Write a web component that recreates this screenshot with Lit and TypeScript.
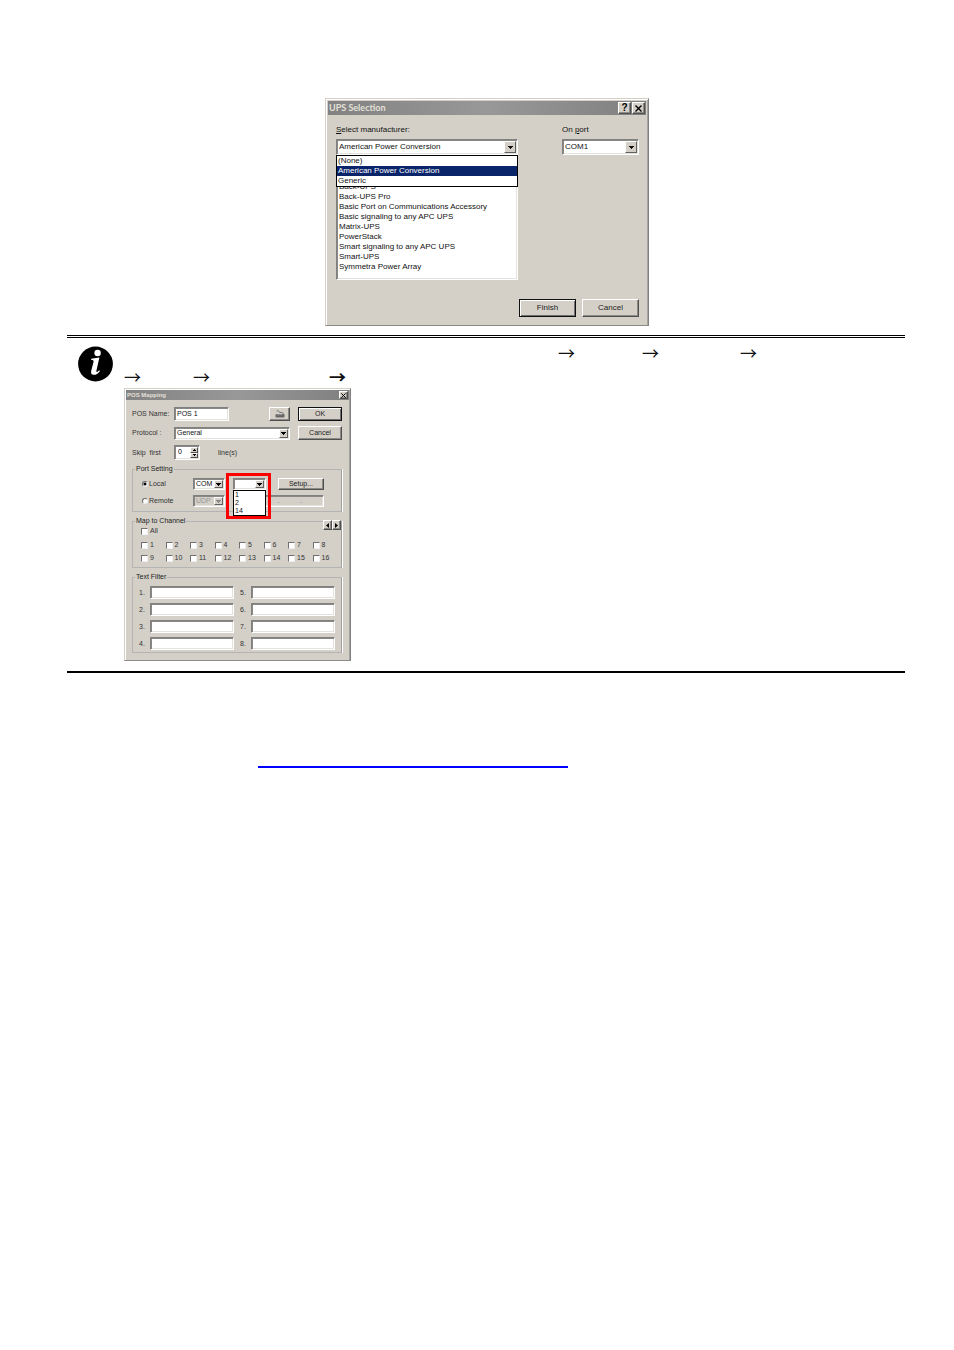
import { LitElement, html, css, svg } from "lit";
import { customElement } from "lit/decorators.js";

const controls = css`
  * { box-sizing: border-box; }
  .window {
    display: block;
    max-width: 100%;
    background: #d4d0c8;
    border: 1px solid;
    border-color: #d4d0c8 #808080 #8c8a86 #d4d0c8;
    box-shadow: inset 1px 1px #fff, inset -1px 0 #a6a4a0;
  }
  .bar {
    display: flex;
    align-items: center;
    background: linear-gradient(90deg, #828282, #989898 50%, #808080);
    color: #e4e0d8;
    font-weight: 700;
  }
  .bar h2 { flex: 1; margin: 0; font-size: inherit; }
  button {
    display: inline-flex;
    align-items: center;
    justify-content: center;
    margin: 0;
    padding: 0;
    font: inherit;
    color: #222;
    background: #d4d0c8;
    border: 1px solid;
    border-color: #fff #505050 #505050 #fff;
    border-radius: 0;
    box-shadow: inset -1px -1px #8c8a86;
  }
  button.default {
    border-color: #111;
    box-shadow: inset 1px 1px #fff, inset -1px -1px #707070;
  }
  input.text, select, .spin, .ip {
    margin: 0;
    padding: 0 0 0 2px;
    font: inherit;
    color: #111;
    background: #fff;
    border: 1px solid;
    border-color: #808080 #fff #fff #808080;
    border-radius: 0;
    box-shadow: inset 1px 1px #8a8884, inset -1px -1px #e4e2dc;
    outline: none;
  }
  select { appearance: none; width: 100%; height: 100%; display: block; opacity: 1; }
  .combo { position: relative; display: block; }
  .combo .drop {
    position: absolute;
    top: 2px;
    right: 2px;
    bottom: 2px;
    display: flex;
    align-items: center;
    justify-content: center;
    background: #d4d0c8;
    border: 1px solid;
    border-color: #fff #606060 #606060 #fff;
    pointer-events: none;
  }
  .menu {
    position: absolute;
    z-index: 2;
    top: 100%;
    left: 0;
    right: 0;
    margin: 0;
    padding: 0;
    list-style: none;
    color: #111;
    background: #fff;
    border: 1px solid #000;
  }
  svg { display: block; }
`;

const triangle = svg`<path d="M0 0h5v1H4v1H3v1H2V2H1V1H0z" fill="currentColor"/>`;
const drop = html`<span class="drop"><svg width="5" height="3" viewBox="0 0 5 3">${triangle}</svg></span>`;
const cross = (n: number) => html`<svg width=${n} height=${n} viewBox="0 0 7 7"><path d="M.5.5l6 6M6.5.5l-6 6" stroke="#000" stroke-width="1.4"/></svg>`;

@customElement("ups-dialog")
class UpsDialog extends LitElement {
  static styles = [controls, css`
    :host { display: block; width: 324px; max-width: 100%; font: 8px/10px "Liberation Sans", sans-serif; color: #111; }
    .window { padding: 2px; height: 228px; }
    .bar { height: 14px; padding: 0 1px; font: 700 9px/14px Lato, sans-serif; }
    .bar button { width: 13px; height: 12px; font: 700 10px/10px "Liberation Sans", sans-serif; color: #000; }
    .bar button + button { margin-left: 1px; }
    .body { padding: 9px 7px 0 8px; }
    .top { display: flex; justify-content: space-between; }
    .maker { width: 182px; }
    .port { width: 77px; }
    label { display: block; line-height: 12px; margin-bottom: 3px; }
    .combo { height: 16px; }
    .drop { width: 12px; }
    .menu li { height: 10px; padding-left: 1px; }
    .menu .on { background: #0a246a; color: #fff; }
    .models { height: 99px; margin-top: 26px; padding: 0; overflow: hidden; scrollbar-width: none; }
    .models option { height: 10px; min-height: 10px; padding: 0 0 0 2px; line-height: 10px; font-size: 8px; }
    .foot { display: flex; justify-content: flex-end; gap: 6px; margin-top: 19px; }
    .foot button { width: 57px; height: 18px; }
  `];

  render() {
    const makers = ["(None)", "American Power Conversion", "Generic"];
    const models = ["Back-UPS", "Back-UPS Pro", "Basic Port on Communications Accessory", "Basic signaling to any APC UPS", "Matrix-UPS", "PowerStack", "Smart signaling to any APC UPS", "Smart-UPS", "Symmetra Power Array"];
    return html`<section class="window">
      <header class="bar"><h2>UPS Selection</h2>
        <button aria-label="Help">?</button><button aria-label="Close">${cross(7)}</button></header>
      <div class="body">
        <div class="top">
          <div class="maker">
            <label for="maker"><u>S</u>elect manufacturer:</label>
            <div class="combo">
              <select id="maker">${makers.map((m, i) => html`<option ?selected=${i === 1}>${m}</option>`)}</select>${drop}
              <ul class="menu" role="listbox">${makers.map((m, i) => html`<li role="option" class=${i === 1 ? "on" : ""}>${m}</li>`)}</ul>
            </div>
            <select class="models" size="9" aria-label="Select model">${models.map((m) => html`<option>${m}</option>`)}</select>
          </div>
          <div class="port">
            <label for="port">On <u>p</u>ort</label>
            <div class="combo"><select id="port"><option>COM1</option></select>${drop}</div>
          </div>
        </div>
        <div class="foot"><button class="default">Finish</button><button>Cancel</button></div>
      </div>
    </section>`;
  }
}

@customElement("pos-dialog")
class PosDialog extends LitElement {
  static styles = [controls, css`
    :host { display: block; width: 227px; max-width: 100%; font: 7px/8px "Liberation Sans", sans-serif; color: #333; }
    .window { padding: 1px 1px 7px; }
    .bar { height: 10px; padding: 0 1px; font: 700 6px/9px "Liberation Sans", sans-serif; }
    .bar button { width: 9px; height: 8px; }
    .body { padding: 7px 7px 0 6px; }
    .form { display: grid; grid-template-columns: 42px 116px 1fr; row-gap: 5px; align-items: center; }
    .form > .act { margin-left: 8px; }
    .line { display: flex; justify-content: space-between; align-items: center; }
    .form .text { width: 55px; height: 14px; padding-bottom: 2px; }
    .act { height: 14px; }
    .print { width: 21px; height: 14px; }
    .proto { height: 13px; }
    .drop { width: 9px; color: #000; }
    .skip { justify-content: flex-start; gap: 18px; }
    .spin { display: flex; width: 26px; height: 15px; padding: 1px; }
    .spin input { flex: 1; min-width: 0; border: 0; padding: 0 0 2px 2px; font: inherit; outline: none; background: none; }
    .arrows { display: flex; flex-direction: column; width: 8px; }
    .arrows button { flex: 1; min-height: 0; box-shadow: none; }
    fieldset { position: relative; margin: 5px 0 0; padding: 0 2px; min-width: 0; border: 1px solid; border-color: #b4b4b4 #a0a0a0 #b4b4b4 #b4b4b4; box-shadow: 1px 0 #fff; }
    legend { margin: 0; padding: 0 1px; line-height: 8px; color: #222; }
    .ports { padding: 5px 15px 4px 7px; display: grid; grid-template-columns: 51px 32px 41px 1fr; row-gap: 5px; }
    .ports > * { height: 12px; }
    .ports label { display: flex; align-items: center; gap: 1px; }
    .num { margin-left: 8px; }
    .setup { margin-left: 12px; }
    .ip { grid-column: 3 / 5; margin-left: 8px; display: flex; justify-content: space-evenly; padding: 1px 0; background: #d4d0c8; color: #777; }
    .num .menu li { height: 8px; padding-left: 1px; }
    .mark { position: absolute; z-index: 3; inset: -5px -5px -29px -7px; border: 3px solid #f00; pointer-events: none; }
    input[type="radio"] { appearance: none; width: 6px; height: 6px; margin: 0; border-radius: 50%; background: #fff; border: 1px solid; border-color: #707070 #eee #eee #707070; }
    input[type="radio"]:checked { background: radial-gradient(circle, #000 0 1px, #fff 2px); }
    input[type="checkbox"] { appearance: none; width: 7px; height: 7px; margin: 0; background: #fff; border: 1px solid; border-color: #707070 #eee #eee #707070; }
    .disabled select { background: #d4d0c8; color: #999; }
    .disabled .drop { color: #888; }
    .channels { padding: 2px 2px 5px 6px; }
    .channels label { display: flex; align-items: center; gap: 2px; height: 8px; }
    .grid { display: grid; grid-template-columns: repeat(8, 1fr); row-gap: 5px; margin-top: 6px; }
    .pager { position: absolute; top: -5px; right: 0; display: flex; }
    .pager button { width: 9px; height: 10px; }
    .filters { display: grid; grid-template-rows: repeat(4, 13px); grid-auto-flow: column; grid-auto-columns: 1fr; gap: 4px 6px; padding: 5px 4px 2px 4px; }
    .filters label { display: grid; grid-template-columns: 11px 1fr; align-items: center; }
    .filters .text { width: 100%; height: 13px; min-width: 0; }
  `];

  render() {
    const check = (n: string) => html`<label><input type="checkbox" />${n}</label>`;
    return html`<section class="window">
      <header class="bar"><h2>POS Mapping</h2><button aria-label="Close">${cross(5)}</button></header>
      <div class="body">
        <div class="form">
          <label for="name">POS Name:</label>
          <div class="line"><input class="text" id="name" value="POS 1" />
            <button class="print" aria-label="Print"><svg width="10" height="8" viewBox="0 0 10 8"><path d="M1.5.8h2l1 1.7h3l1 1.5" fill="none" stroke="#777"/><rect x="0.5" y="4" width="9" height="3.5" rx="1" fill="#666"/><path d="M1.5 4.7h6" stroke="#aaa" stroke-width=".7"/></svg></button></div>
          <button class="act default">OK</button>
          <label for="proto">Protocol :</label>
          <div class="combo proto"><select id="proto"><option>General</option></select>${drop}</div>
          <button class="act">Cancel</button>
          <label for="skip">Skip&nbsp; first</label>
          <div class="line skip"><span class="spin"><input id="skip" value="0" /><span class="arrows">
            <button aria-label="More"><svg width="3" height="2" viewBox="0 0 3 2"><path d="M1 0h1v1h1v1H0V1h1z"/></svg></button>
            <button aria-label="Less"><svg width="3" height="2" viewBox="0 0 3 2"><path d="M0 0h3v1H2v1H1V1H0z"/></svg></button></span></span><span>line(s)</span></div>
        </div>
        <fieldset><legend>Port Setting</legend>
          <div class="ports">
            <label><input type="radio" name="where" checked />Local</label>
            <div class="combo"><select aria-label="Port type"><option>COM</option></select>${drop}</div>
            <div class="combo num"><select aria-label="Port number"><option></option></select>${drop}
              <ul class="menu" role="listbox">${["1", "2", "14"].map((n) => html`<li role="option">${n}</li>`)}</ul>
              <span class="mark"></span></div>
            <button class="setup">Setup...</button>
            <label><input type="radio" name="where" />Remote</label>
            <div class="combo disabled"><select disabled aria-label="Network type"><option>UDP</option></select>${drop}</div>
            <span class="ip"><span>.</span><span>.</span><span>.</span></span>
          </div>
        </fieldset>
        <fieldset><legend>Map to Channel</legend>
          <div class="pager">
            <button aria-label="Previous"><svg width="3" height="5" viewBox="0 0 3 5"><path d="M3 0v5L0 2.5z"/></svg></button>
            <button aria-label="Next"><svg width="3" height="5" viewBox="0 0 3 5"><path d="M0 0v5l3-2.5z"/></svg></button></div>
          <div class="channels">
            ${check("All")}
            <div class="grid">${Array.from({ length: 16 }, (_, i) => check(String(i + 1)))}</div>
          </div>
        </fieldset>
        <fieldset><legend>Text Filter</legend>
          <div class="filters">${Array.from({ length: 8 }, (_, i) => html`<label>${i + 1}.<input class="text" /></label>`)}</div>
        </fieldset>
      </div>
    </section>`;
  }
}

@customElement("app-root")
class AppRoot extends LitElement {
  static styles = css`
    :host { display: block; min-height: 100vh; background: #fff; font-family: "Liberation Sans", sans-serif; }
    main { padding: 98px 49px 0 67px; }
    .first { margin: 0 auto 9px 258px; }
    .note { display: grid; grid-template-columns: 57px 1fr; border-top: 3px double #000; border-bottom: 2px solid #000; padding: 8px 0 10px; }
    .info { display: block; margin-left: 11px; }
    .path { display: grid; margin: 0; height: 24px; font: 17px/14px "Noto Sans CJK JP", sans-serif; color: #111; }
    .one { grid-template-columns: 434px 84px 98px 1fr; }
    .two { grid-template-columns: 69px 136px 1fr; height: 18px; }
    .link { display: block; width: 310px; max-width: 100%; height: 95px; box-sizing: border-box; margin-left: 191px; border-bottom: 2px solid #00f; }
  `;

  render() {
    return html`<main>
      <ups-dialog class="first"></ups-dialog>
      <section class="note">
        <svg class="info" width="36" height="36" viewBox="0 0 36 36" role="img" aria-label="Information">
          <circle cx="17.5" cy="18" r="17.4" fill="#000"/>
          <circle cx="19.6" cy="7" r="3.2" fill="#fff"/>
          <path d="M13.2 12.8l8.2-1.2-3 13.2c-.3 1.6.6 1.8 2.8-.6l.8.7c-2.4 3.4-4.8 4.3-7 3.8-1.8-.4-2.2-1.9-1.8-3.8l2.4-9.4c.2-1-.3-1.6-2.4-1.6z" fill="#fff"/>
        </svg>
        <div>
          <p class="path one"><span></span><span>→</span><span>→</span><span>→</span></p>
          <p class="path two"><span>→</span><span>→</span><b>→</b></p>
          <pos-dialog></pos-dialog>
        </div>
      </section>
      <a class="link" href="#" aria-label="Website"></a>
    </main>`;
  }
}
